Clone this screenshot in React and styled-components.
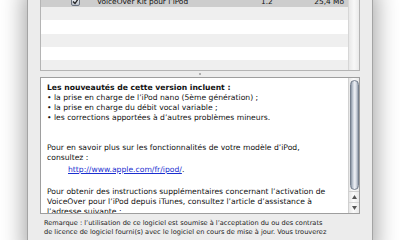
import React from 'react';
import styled, { createGlobalStyle } from 'styled-components';

const Global = createGlobalStyle`
  html, body { margin: 0; padding: 0; background: #ffffff; overflow: hidden; }
  body { width: 400px; height: 240px; }
`;

const Page = styled.div`
  width: 400px;
  height: 240px;
  overflow: hidden;
  padding-left: 27px;
  box-sizing: border-box;
  font-family: "DejaVu Sans", "Noto Sans", sans-serif;
  color: #111;
`;

const Window = styled.div`
  width: 346px;
  height: 262px;
  box-sizing: border-box;
  margin-top: -8px;
  background: #ececec;
  border-left: 1px solid #a4a4a4;
  border-right: 1px solid #a4a4a4;
  box-shadow: 0 0 22px 3px rgba(0, 0, 0, 0.36);
  padding: 0 12px;
  display: flex;
  flex-direction: column;
`;

const Table = styled.div`
  height: 79px;
  box-sizing: border-box;
  border: 1px solid #b4b4b4;
  display: flex;
  background: #fff;
`;

const Rows = styled.div`
  flex: 1;
  overflow: hidden;
`;

const Row = styled.div`
  height: ${p => p.$h}px;
  display: grid;
  grid-template-columns: 56px 164px 40px 47px;
  align-items: center;
  background: ${p => (p.$selected ? '#cdcdcd' : p.$alt ? '#efefef' : '#ffffff')};
  font-size: 7.4px;
  white-space: nowrap;
  padding-top: 2px;
  box-sizing: border-box;
`;

const CheckCell = styled.div`
  justify-self: end;
  margin-right: 17px;
  display: flex;
`;

const Check = styled.div`
  width: 9px;
  height: 9px;
  box-sizing: border-box;
  border: 1px solid #6b7380;
  border-radius: 2px;
  background: linear-gradient(#f4f6f9, #b9c0ca);
  display: flex;
  align-items: center;
  justify-content: center;
`;

const Cell = styled.div`
  text-align: ${p => (p.$right ? 'right' : 'left')};
  padding-right: ${p => (p.$right ? '4px' : '0')};
`;

const TableScroll = styled.div`
  width: 10px;
  border-left: 1px solid #d6d6d6;
  background: linear-gradient(to right, #e8e8e8, #f8f8f8 50%, #eaeaea);
`;

const Splitter = styled.div`
  height: 6px;
  display: flex;
  align-items: center;
  justify-content: center;
`;

const Dimple = styled.div`
  width: 2px;
  height: 2px;
  border-radius: 50%;
  background: #9a9a9a;
`;

const TextBox = styled.div`
  height: 137px;
  box-sizing: border-box;
  border: 1px solid #9e9e9e;
  background: #fff;
  display: flex;
  overflow: hidden;
`;

const Content = styled.div`
  flex: 1;
  padding: 5px 0 0 6px;
  font-size: 7.65px;
  line-height: 10px;
  white-space: nowrap;
  overflow: hidden;
`;

const Line = styled.div`
  font-weight: ${p => (p.$bold ? 'bold' : 'normal')};
  padding-left: ${p => p.$indent || 0}px;
  margin-top: ${p => p.$mt || 0}px;
  height: 10px;
`;

const Link = styled.a`
  color: #1b2fd0;
  text-decoration: underline;
`;

const VScroll = styled.div`
  width: 11px;
  border-left: 1px solid #d0d0d0;
  background: linear-gradient(to right, #e6e6e6, #fbfbfb 45%, #e9e9e9);
  display: flex;
  flex-direction: column;
  padding-top: 2px;
  box-sizing: border-box;
`;

const Thumb = styled.div`
  height: 110px;
  margin: 0 0.5px;
  box-sizing: border-box;
  border: 1px solid #76808e;
  border-radius: 5px;
  background: linear-gradient(to right, #8a95a4, #ccd3dc 30%, #f0f2f6 55%, #c6ccd6 80%, #949eab);
`;

const Arrows = styled.div`
  margin-top: auto;
  display: flex;
  flex-direction: column;
  border-top: 1px solid #cfcfcf;
`;

const ArrowBtn = styled.div`
  height: 10px;
  display: flex;
  align-items: center;
  justify-content: center;
  border-top: ${p => (p.$sep ? '1px solid #d4d4d4' : 'none')};
`;

const Note = styled.div`
  padding: 5px 0 0 4px;
  font-size: 6.6px;
  line-height: 9px;
  white-space: nowrap;
  color: #1a1a1a;
`;

const Tri = ({ down }) => (
  <svg width="5" height="4" viewBox="0 0 5 4">
    <path d={down ? 'M0 0 L5 0 L2.5 4 Z' : 'M2.5 0 L5 4 L0 4 Z'} fill="#555" />
  </svg>
);

export default function App() {
  const rows = [
    { h: 14, selected: true },
    { h: 13.25, alt: true },
    { h: 13.25 },
    { h: 13.25, alt: true },
    { h: 13.25 },
    { h: 13.25, alt: true },
  ];
  return (
    <>
      <Global />
      <Page>
        <Window>
          <Table>
            <Rows>
              {rows.map((r, i) => (
                <Row key={i} $h={r.h} $selected={r.selected} $alt={r.alt}>
                  {i === 0 ? (
                    <>
                      <CheckCell>
                        <Check>
                          <svg width="7" height="7" viewBox="0 0 7 7">
                            <path d="M1 3.5 L3 5.5 L6.5 0.5" stroke="#222" strokeWidth="1.3" fill="none" />
                          </svg>
                        </Check>
                      </CheckCell>
                      <Cell>VoiceOver Kit pour l’iPod</Cell>
                      <Cell>1.2</Cell>
                      <Cell $right>25,4 Mo</Cell>
                    </>
                  ) : null}
                </Row>
              ))}
            </Rows>
            <TableScroll />
          </Table>
          <Splitter>
            <Dimple />
          </Splitter>
          <TextBox>
            <Content>
              <Line $bold>Les nouveautés de cette version incluent :</Line>
              <Line>• la prise en charge de l’iPod nano (5ème génération) ;</Line>
              <Line>• la prise en charge du débit vocal variable ;</Line>
              <Line>• les corrections apportées à d’autres problèmes mineurs.</Line>
              <Line />
              <Line />
              <Line>Pour en savoir plus sur les fonctionnalités de votre modèle d’iPod,</Line>
              <Line>consultez :</Line>
              <Line $indent={21} $mt={2}>
                <Link href="#">http://www.apple.com/fr/ipod/</Link>.
              </Line>
              <Line $mt={12}>Pour obtenir des instructions supplémentaires concernant l’activation de</Line>
              <Line>VoiceOver pour l’iPod depuis iTunes, consultez l’article d’assistance à</Line>
              <Line>l’adresse suivante :</Line>
            </Content>
            <VScroll>
              <Thumb />
              <Arrows>
                <ArrowBtn><Tri /></ArrowBtn>
                <ArrowBtn $sep><Tri down /></ArrowBtn>
              </Arrows>
            </VScroll>
          </TextBox>
          <Note>
            Remarque : l’utilisation de ce logiciel est soumise à l’acceptation du ou des contrats
            <br />
            de licence de logiciel fourni(s) avec le logiciel en cours de mise à jour. Vous trouverez
          </Note>
        </Window>
      </Page>
    </>
  );
}
